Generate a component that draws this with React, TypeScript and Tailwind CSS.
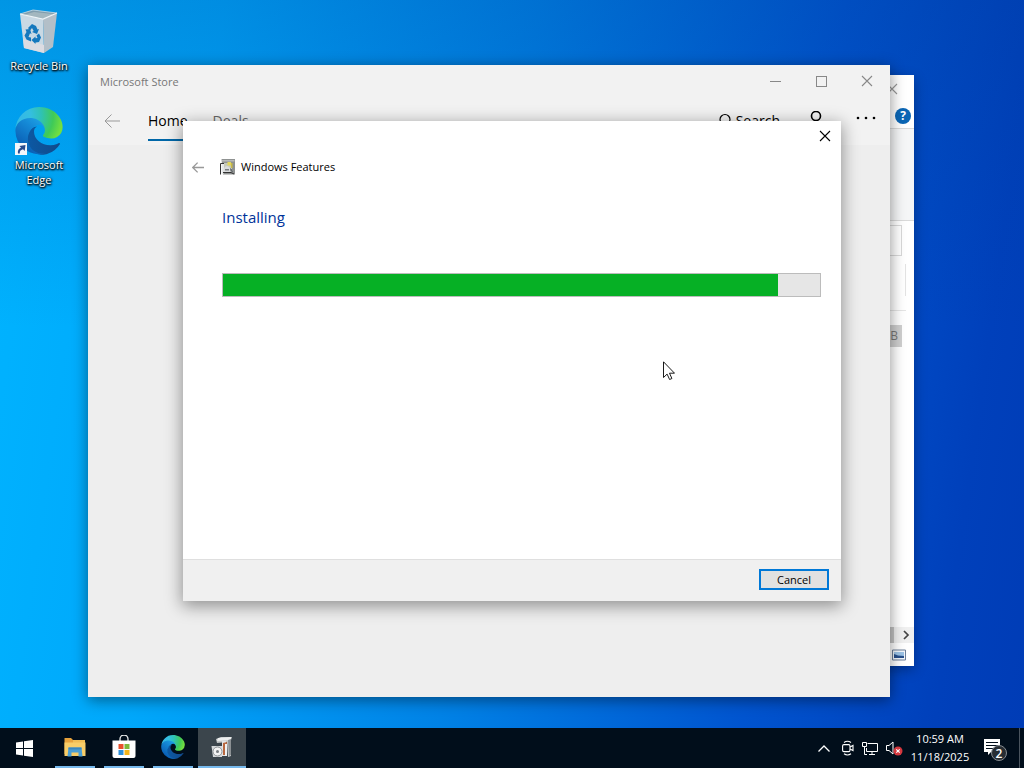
import { useId, useState } from 'react';
import type { ReactNode } from 'react';

const XIcon = ({ className }: { className?: string }) => (
  <svg viewBox="0 0 12 12" className={className} fill="none" stroke="currentColor" strokeWidth="1.1">
    <path d="M1 1l10 10M11 1L1 11" />
  </svg>
);

const BackArrow = ({ className, strokeWidth = 1 }: { className?: string; strokeWidth?: number }) => (
  <svg viewBox="0 0 16 14" className={className} fill="none" stroke="currentColor" strokeWidth={strokeWidth}>
    <path d="M16 7H1M7.500 .5L1 7l6.500 6.500" />
  </svg>
);

const EdgeLogo = ({ className }: { className?: string }) => {
  const id = useId();

  return (
    <svg viewBox="0 0 256 260" className={className}>
      <defs>
        <linearGradient id={`${id}a`} x1="63" y1="178" x2="241" y2="178" gradientUnits="userSpaceOnUse">
          <stop offset="0" stopColor="#0c59a4" />
          <stop offset="1" stopColor="#114a8b" />
        </linearGradient>
        <linearGradient id={`${id}b`} x1="150" y1="90" x2="50" y2="225" gradientUnits="userSpaceOnUse">
          <stop offset="0" stopColor="#1b9de2" />
          <stop offset=".3" stopColor="#1589d6" />
          <stop offset="1" stopColor="#0a5fb5" />
        </linearGradient>
        <radialGradient id={`${id}c`} cx="26" cy="47" r="230" gradientUnits="userSpaceOnUse">
          <stop offset="0" stopColor="#35b8e6" />
          <stop offset=".25" stopColor="#34bfe0" />
          <stop offset=".5" stopColor="#2fc2b4" />
          <stop offset=".78" stopColor="#3fca58" />
          <stop offset="1" stopColor="#74df3f" />
        </radialGradient>
      </defs>
      <path
        fill={`url(#${id}a)`}
        d="M235.68 195.53a93.73 93.73 0 0 1-10.54 4.71 101.87 101.87 0 0 1-35.9 6.46c-47.32 0-88.54-32.55-88.54-74.32A31.48 31.48 0 0 1 117.13 105c-42.8 1.8-53.8 46.4-53.8 72.53 0 73.88 68.09 81.37 82.76 81.37 7.91 0 19.84-2.3 27-4.56l1.31-.44a128.34 128.34 0 0 0 66.6-52.8 4 4 0 0 0-5.32-5.57z"
      />
      <path
        fill={`url(#${id}b)`}
        d="M105.73 241.42A79.2 79.2 0 0 1 83 220.08a80.72 80.72 0 0 1 29.53-120c3.12-1.47 8.45-4.13 15.54-4a32.35 32.35 0 0 1 25.69 13 31.88 31.88 0 0 1 6.36 18.66c0-.21 24.46-79.6-80-79.6-43.9 0-80 41.66-80 78.21a130.15 130.15 0 0 0 12.11 56 128 128 0 0 0 156.38 67.11 75.55 75.55 0 0 1-62.78-8z"
      />
      <path
        fill={`url(#${id}c)`}
        d="M152.33 148.86c-.81 1.05-3.3 2.5-3.3 5.66 0 2.61 1.7 5.12 4.72 7.23 14.38 10 41.49 8.68 41.56 8.68a59.56 59.56 0 0 0 30.27-8.35 61.38 61.38 0 0 0 30.43-52.88c.26-22.41-8-37.31-11.34-43.91C223.46 23.84 177.72 0 128 0A128 128 0 0 0 0 126.2c.48-36.54 36.8-66.05 80-66.05 3.5 0 23.46.34 42 10.07 16.34 8.58 24.9 18.94 30.85 29.21 6.18 10.67 7.28 24.15 7.28 29.52s-2.74 13.33-7.8 19.91z"
      />
    </svg>
  );
};

const RecycleBinIcon = () => (
  <svg viewBox="0 0 48 48" className="size-12">
    <path d="M5 6l13-4 24 3-9 8z" fill="#7f9eaf" />
    <path d="M8 7l11-3 19 2-6 5z" fill="#a3b7bf" />
    <path d="M5 6l23 5 1 34-20-5z" fill="#c9d9e4" />
    <path d="M28 11l14-6-4 34-9 6z" fill="#b3bfc8" />
    <path d="M5 6l23 5 14-6" fill="none" stroke="#eef4f7" strokeWidth="1.200" />
    <path d="M5 6l13-4 24 3" fill="none" stroke="#cfdde5" strokeWidth=".8" />
    <path d="M8 31l21 6v8L9 40z" fill="#dcdce2" />
    <g fill="#1578bd">
      <path d="M13 20l4-4 4 2 1.500 3.500 1.500-.5-2 5-5-2 1.700-1-1.700-3-2 2.500z" />
      <path d="M10.500 21.500l4.500-.5 1.500 5-1.500-.8-1.500 3.800 2.500.5v4l-4.500-2-2-4 2-3.500z" />
      <path d="M24 25.500l2 4-2 4.500-3.500.5v1.500l-4-4 4-3.500v1.800l2-.3-1-2.500z" />
    </g>
  </svg>
);

const ShortcutBadge = () => (
  <svg viewBox="0 0 12 12" className="absolute bottom-0 left-0 size-3">
    <path d="M0 0h12v12H0z" fill="#f3f6fa" />
    <path d="M3 10.500c-.6-3 .7-5 3-5.700L4.500 3l6-1-.8 6-1.700-1.700C5.500 7 4.500 8.300 4.800 10.500z" fill="#294b8e" />
  </svg>
);

const InstallerIcon = () => (
  <svg viewBox="0 0 16 16" className="size-4">
    <path d="M1.500 0H15v15.500H3z" fill="#8f9291" />
    <path d="M2 1h12.500v1.500H2z" fill="#b8bab9" />
    <path d="M4 4h8v6H4z" fill="#c5c9bb" />
    <path d="M7.500 3h3.500v3.500H7.500z" fill="#e2d65a" />
    <path d="M11 4h1.500v5H11z" fill="#c9b94a" />
    <path d="M1.500 5H4v9.500H1.500z" fill="#e6e8e9" />
    <path d="M4 9q3-4 6 0v3l2 1.500H3z" fill="#d9dbdc" />
    <path d="M5 10h4v1.500H5z" fill="#787d80" />
    <path d="M.5 15.500V4.500H4M3 13.500h8l3 1.500" fill="none" stroke="#333" />
    <path d="M10.500 9.500l2 3.500" stroke="#5a6065" />
  </svg>
);

const WindowsLogo = () => (
  <svg viewBox="0 0 17 17" className="size-[17px]" fill="#fff">
    <path d="M0 2.400L7 1.400V8H0zM8 1.300L17 0v8H8zM0 9h7v6.600l-7-1zM8 9h9v8l-9-1.300z" />
  </svg>
);

const FolderIcon = () => (
  <svg viewBox="0 0 24 24" className="size-6">
    <path d="M1.500 3h6.500l2 2h12v14h-20.500z" fill="#e7a23c" />
    <path d="M10 5h12v3H10z" fill="#f0bd55" />
    <path d="M1.500 7.500h21v13.500h-21z" fill="#f8cd68" />
    <path d="M5.500 12.500h13l1 9h-4v-4h-7v4h-4z" fill="#4a9fd6" />
    <path d="M5.500 12.500h13v2h-13z" fill="#3a86bd" />
  </svg>
);

const StoreIcon = () => (
  <svg viewBox="0 0 24 24" className="size-6">
    <path d="M8 6V4a4 4 0 0 1 8 0v2" fill="none" stroke="#e8eaea" strokeWidth="1.300" />
    <path d="M.5 5.500h23V21q0 2-2 2h-19q-2 0-2-2z" fill="#fff" />
    <path d="M6.500 9h5v5h-5z" fill="#e8502c" />
    <path d="M12.500 9h5v5h-5z" fill="#7db93a" />
    <path d="M6.500 15h5v5h-5z" fill="#2d8fd9" />
    <path d="M12.500 15h5v5h-5z" fill="#f5b51b" />
  </svg>
);

const FeaturesIcon = () => (
  <svg viewBox="0 0 24 24" className="size-6">
    <path d="M6 4l5-2h11l-1 3v16l-3 1-1-15-10 1z" fill="#c4c7c8" />
    <path d="M8 3l13-1v3L7 6z" fill="#eceeee" />
    <path d="M18 5l3-1v16l-2 1z" fill="#8b9093" />
    <path d="M12 6h4v15h-4z" fill="#e2e4e5" />
    <path d="M13 8l4-1v2l-2 1v10h-2z" fill="#b9683f" />
    <path d="M15 9h2v12h-2z" fill="#f0f1f1" />
    <path d="M1.500 11H12v11H3z" fill="#d5d8da" />
    <circle cx="7.500" cy="16.500" r="4.500" fill="#f3f3f3" stroke="#8d9295" strokeWidth="1" />
    <circle cx="7.500" cy="16.500" r="1.500" fill="#777c80" />
  </svg>
);

type DesktopShortcutProps = { label: string; children: ReactNode };

const DesktopShortcut = ({ label, children }: DesktopShortcutProps) => (
  <button className="flex w-[78px] flex-col items-center text-white">
    <span className="relative">{children}</span>
    <span className="mt-0.5 w-[72px] text-center leading-[15px] [text-shadow:0_1px_2px_#000,1px_1px_2px_#000,0_0_3px_rgba(0,0,0,0.6)]">
      {label}
    </span>
  </button>
);

type TaskButtonProps = { label: string; active?: boolean; children: ReactNode };

const TaskButton = ({ label, active = false, children }: TaskButtonProps) => (
  <button
    aria-label={label}
    className={`flex w-12 flex-col items-center ${active ? 'bg-[#3b454c]' : ''}`}
  >
    <span className="flex flex-1 items-center">{children}</span>
    <span className={`h-0.5 bg-[#76b9ed] ${active ? 'w-full' : 'w-10'}`} />
  </button>
);

const ExplorerWindow = () => (
  <section
    aria-label="File Explorer"
    className="absolute top-[75px] right-[110px] bottom-[62px] left-28 flex flex-col overflow-hidden bg-white shadow-[0_4px_12px_rgba(0,0,0,0.3)]"
  >
    <div className="flex h-7 items-center justify-end pr-4">
      <button aria-label="Close File Explorer" className="text-[#999]">
        <XIcon className="size-3" />
      </button>
    </div>
    <div className="flex h-[26px] items-center justify-end border-b border-[#dadada] pr-[3px]">
      <button aria-label="Help" className="flex size-4 items-center justify-center rounded-full bg-[#0b66b5] text-xs font-bold text-white">
        ?
      </button>
    </div>
    <div className="h-[92px] border-b border-[#dadada] bg-[#f5f6f7]" />
    <div className="mt-1 mr-3 h-[31px] border border-[#d9d9d9]" />
    <div className="mt-2 mr-2 h-8 border-r border-[#e3e3e3]" />
    <div className="mt-3.5 mr-2 border-t border-[#e5e5e5]" />
    <div className="mt-3.5 mr-3 flex h-[22px] items-center justify-end bg-[#cfcfcf] pr-1 text-xs text-[#777]">B</div>
    <div className="flex-1" />
    <div className="flex h-4 items-center bg-[#f0f0f0] pr-1">
      <div className="h-4 flex-1 bg-[#c4c4c4]" />
      <button aria-label="Scroll right" className="pl-2">
        <svg viewBox="0 0 8 10" className="h-2.5 w-2" fill="none" stroke="#444" strokeWidth="1.700">
          <path d="M2 1l4 4-4 4" />
        </svg>
      </button>
    </div>
    <div className="flex h-[23px] items-center justify-end pr-2">
      <button aria-label="Large icons view">
        <svg viewBox="0 0 14 12" className="h-3 w-3.5">
          <path d="M.5 1h13v10H.5z" fill="#f4f8fc" stroke="#6d7f98" />
          <path d="M2 3h10v6H2z" fill="#9cc3e6" />
          <path d="M2 5l4 1.500 6 .5v2H2z" fill="#28508c" />
        </svg>
      </button>
    </div>
  </section>
);

const StoreWindow = () => (
  <section
    aria-label="Microsoft Store"
    className="absolute top-[65px] right-[134px] bottom-[31px] left-[88px] flex flex-col bg-[#eee] shadow-[0_3px_14px_rgba(0,0,0,0.45)]"
  >
    <header className="flex h-8 items-center bg-[#f2f2f2] pl-3 text-[#777]">
      <h1 className="flex-1 pt-0.5">Microsoft Store</h1>
      <button aria-label="Minimize" className="flex w-[46px] justify-center">
        <span className="w-[11px] border-t border-[#888]" />
      </button>
      <button aria-label="Maximize" className="flex w-[46px] justify-center">
        <span className="size-[11px] border border-[#888]" />
      </button>
      <button aria-label="Close Microsoft Store" className="flex w-[46px] justify-center text-[#888]">
        <XIcon className="size-3" />
      </button>
    </header>
    <nav className="flex h-12 items-center bg-[#f2f2f2] pr-3.5 pl-4 text-sm">
      <button aria-label="Back" className="mr-7 text-[#999]">
        <BackArrow className="h-3.5 w-4" />
      </button>
      <div className="flex flex-1 gap-[25px] pt-px">
        <a href="#home" className="border-b-2 border-[#0067a8] pt-2 pb-2 leading-5 text-black">
          Home
        </a>
        <a href="#deals" className="pt-2 pb-2 leading-5 text-[#666]">
          Deals
        </a>
      </div>
      <button className="mr-7 flex items-center gap-1 text-black">
        <svg viewBox="0 0 16 16" className="size-4" fill="none" stroke="currentColor" strokeWidth="1.200">
          <circle cx="9" cy="6.500" r="5" />
          <path d="M5.500 10L1 14.500" />
        </svg>
        Search
      </button>
      <button aria-label="Account" className="mr-8 text-black">
        <svg viewBox="0 0 16 20" className="h-5 w-4" fill="none" stroke="currentColor" strokeWidth="1.600">
          <circle cx="8" cy="5" r="4.500" />
          <path d="M1.500 18a6.500 6.500 0 0 1 13 0" />
        </svg>
      </button>
      <button aria-label="More options" className="mb-1.5 text-black">
        <svg viewBox="0 0 20 4" className="h-1 w-5" fill="currentColor">
          <circle cx="2" cy="2" r="1.300" />
          <circle cx="10" cy="2" r="1.300" />
          <circle cx="18" cy="2" r="1.300" />
        </svg>
      </button>
    </nav>
  </section>
);

const FeaturesDialog = ({ progress }: { progress: number }) => (
  <section
    role="dialog"
    aria-label="Windows Features"
    className="absolute top-[121px] right-[183px] bottom-[127px] left-[183px] flex flex-col bg-white shadow-[0_4px_16px_1px_rgba(0,0,0,0.4)]"
  >
    <div className="flex h-[30px] items-center justify-end pr-2.5">
      <button aria-label="Close Windows Features" className="text-black">
        <XIcon className="size-3" />
      </button>
    </div>
    <header className="flex h-8 items-center pl-[9px] text-black">
      <button aria-label="Back" disabled className="mr-4 text-[#999]">
        <BackArrow className="h-[11px] w-3" strokeWidth={1.700} />
      </button>
      <InstallerIcon />
      <h2 className="ml-[5px]">Windows Features</h2>
    </header>

    {/* Progress */}
    <div className="flex-1 pt-[22px] pr-5 pl-[39px]">
      <p className="text-[15px] leading-6 text-[#003399]">Installing</p>
      <div
        role="progressbar"
        aria-label="Installing"
        aria-valuenow={progress}
        className="mt-11 h-6 border border-[#bcbcbc] bg-[#e6e6e6]"
      >
        <div className="h-full bg-[#06b025]" style={{ width: `${progress}%` }} />
      </div>
    </div>

    <footer className="flex h-[42px] items-center justify-end border-t border-[#dfdfdf] bg-[#f0f0f0] pr-3 pb-0.5">
      <button className="h-[21px] w-[70px] border-2 border-[#0078d7] bg-[#e1e1e1] leading-4 text-black">
        Cancel
      </button>
    </footer>
  </section>
);

const Taskbar = () => (
  <footer className="flex h-10 justify-between bg-[#010e1b] text-white">
    <div className="flex gap-px">
      <button aria-label="Start" className="mr-0.5 flex w-12 items-center justify-center">
        <WindowsLogo />
      </button>
      <TaskButton label="File Explorer">
        <FolderIcon />
      </TaskButton>
      <TaskButton label="Microsoft Store">
        <StoreIcon />
      </TaskButton>
      <TaskButton label="Microsoft Edge">
        <EdgeLogo className="size-6" />
      </TaskButton>
      <TaskButton label="Windows Features" active>
        <FeaturesIcon />
      </TaskButton>
    </div>

    {/* System tray */}
    <div className="flex items-center">
      <button aria-label="Show hidden icons" className="mr-3">
        <svg viewBox="0 0 12 7" className="h-[7px] w-3" fill="none" stroke="#fff" strokeWidth="1.300">
          <path d="M.5 6.500L6 1l5.500 5.500" />
        </svg>
      </button>
      <button aria-label="Meet Now" className="mr-2">
        <svg viewBox="0 0 12 16" className="h-4 w-3" fill="none" stroke="#fff" strokeWidth="1.100">
          <rect x=".6" y="4.600" width="7.400" height="7" rx="1.300" />
          <path d="M8 7l3-1.500v5L8 9M2 2.500Q5.500 0 9 2.500M2 13.700Q5.500 16.200 9 13.700" />
        </svg>
      </button>
      <button aria-label="Network" className="mr-2">
        <svg viewBox="0 0 16 15" className="h-[15px] w-4" fill="none" stroke="#fff" strokeWidth="1">
          <path d="M5.500 2.500h10v8h-11V7M10 10.500v3M7 13.500h6" />
          <path d="M.5 1.500h4v4h-4zM2.500 5.500v8H5" />
        </svg>
      </button>
      <button aria-label="Volume muted" className="mr-1.5">
        <svg viewBox="0 0 17 16" className="h-4 w-[17px]">
          <path d="M.5 5.500h2.500L7 2v12l-4-3.500H.5z" fill="none" stroke="#fff" />
          <circle cx="12" cy="11" r="4.500" fill="#d5383f" />
          <path d="M10.300 9.300l3.400 3.400M13.700 9.300l-3.400 3.400" stroke="#fff" strokeWidth="1.200" />
        </svg>
      </button>
      <time className="w-[62px] text-center leading-[18px]">
        10:59 AM
        <br />
        11/18/2025
      </time>
      <button aria-label="2 notifications" className="mr-2.5 ml-3">
        <svg viewBox="0 0 26 26" className="size-[26px]">
          <path d="M1 4h16v13H8l-3 3v-3H1z" fill="#fff" />
          <path d="M3 7.500h12M3 10.500h12M3 13.500h8" stroke="#010e1b" />
          <circle cx="16" cy="18" r="7.500" fill="#272d33" stroke="#868b90" />
          <text x="16" y="22.500" textAnchor="middle" fontSize="12" fontWeight="600" fill="#fff">
            2
          </text>
        </svg>
      </button>
      <button aria-label="Show desktop" className="h-full w-[5px] border-l border-[#4a545e]" />
    </div>
  </footer>
);

const App = () => {
  const [progress] = useState(93);

  return (
    <div className="flex h-screen flex-col overflow-hidden font-['Open_Sans','Noto_Sans',sans-serif] text-[11px]">
      <main className="relative flex-1 bg-[linear-gradient(180deg,rgba(0,60,150,0.25)_0%,rgba(0,60,150,0)_45%),linear-gradient(98deg,#00b4ff_0%,#00a8fb_20%,#0082e6_48%,#0054cf_75%,#0040bb_92%,#003cb6_100%)]">
        <div className="flex flex-col gap-[34px] pt-2">
          <DesktopShortcut label="Recycle Bin">
            <RecycleBinIcon />
          </DesktopShortcut>
          <DesktopShortcut label="Microsoft Edge">
            <EdgeLogo className="size-12" />
            <ShortcutBadge />
          </DesktopShortcut>
        </div>

        <ExplorerWindow />
        <StoreWindow />
        <FeaturesDialog progress={progress} />

        {/* Mouse pointer */}
        <svg viewBox="0 0 12 19" className="absolute top-[361px] left-[663px] h-[19px] w-3">
          <path d="M.5 .8v15.700l3.600-3.400 2.500 5.400 2.300-1-2.400-5.300h5z" fill="#fff" stroke="#000" strokeWidth=".9" />
        </svg>
      </main>
      <Taskbar />
    </div>
  );
};

export default App;
